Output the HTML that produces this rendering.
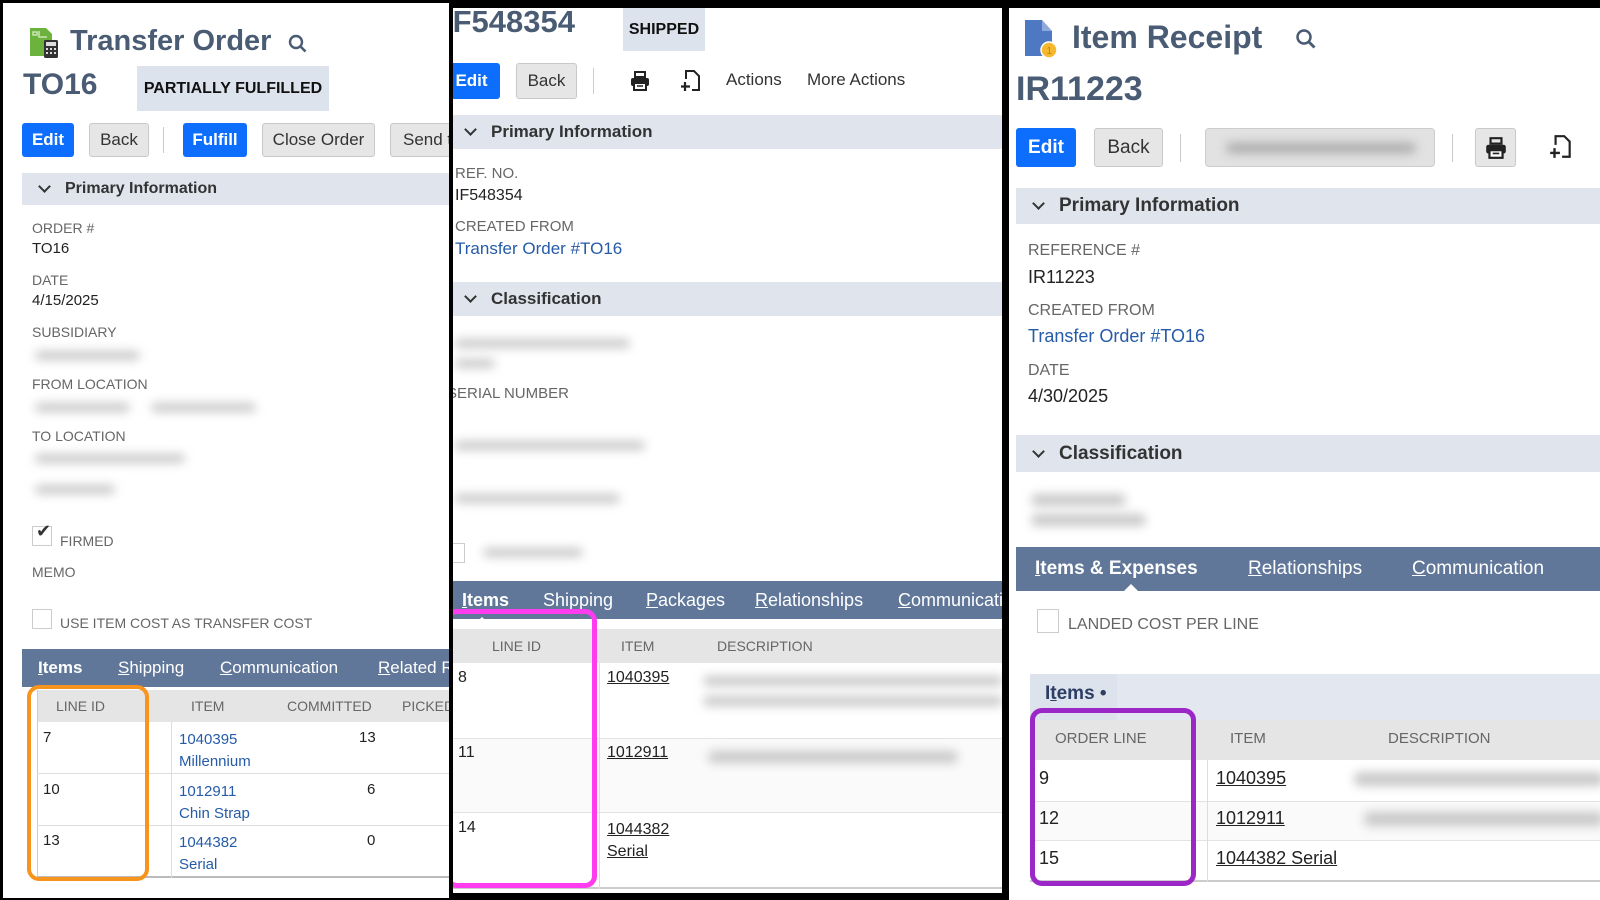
<!DOCTYPE html>
<html><head><meta charset="utf-8"><style>
*{margin:0;padding:0;box-sizing:border-box}
body{width:1600px;height:900px;background:#000;position:relative;overflow:hidden;font-family:"Liberation Sans",Arial,sans-serif;color:#222}
.p{position:absolute;background:#fff;overflow:hidden}
.a{position:absolute;white-space:nowrap}
.t{font-weight:bold;color:#4a5b74}
.btn{position:absolute;border-radius:3px;font-size:17px;display:flex;align-items:center;justify-content:center}
.bl{background:#0d6efd;color:#fff;font-weight:bold}
.gr{background:#e6e6e6;border:1px solid #c9c9c9;color:#333}
.div{position:absolute;width:1px;background:#ccc}
.hd{position:absolute;background:#e0e5ed;font-weight:bold;color:#333;display:flex;align-items:center}
.hd i{display:inline-block;width:9px;height:9px;border-right:2.5px solid #333;border-bottom:2.5px solid #333;transform:rotate(45deg);margin:-5px 16px 0 4px;font-style:normal}
.lb{position:absolute;color:#666;font-size:14px;white-space:nowrap}
.v{position:absolute;color:#222;font-size:15px;white-space:nowrap}
.lk{color:#255ba8}
.bz{position:absolute;background:#c8c8c8;filter:blur(5px);border-radius:6px;height:9px}
.tab{position:absolute;background:#607799;color:#fff}
.tab span{position:absolute;white-space:nowrap}
.tab u{text-decoration:underline}
.th{position:absolute;background:#e5e5e5;color:#666;font-size:14px}
.cb{position:absolute;width:20px;height:20px;border:1px solid #ccc;background:#fff}
.u{text-decoration:underline;color:#222}
</style></head><body>

<!-- LEFT PANEL -->
<div class="p" style="left:3px;top:3px;width:446px;height:895px">
 <svg class="a" style="left:25px;top:23px" width="32" height="34" viewBox="0 0 32 34"><path d="M2 2h16l6 6v22H2z" fill="#6cb33e"/><path d="M5 6h4v3H5zM11 5v6h8" stroke="#c9e6b0" stroke-width="1.5" fill="none"/><rect x="16" y="14" width="14" height="18" rx="1.5" fill="#333"/><rect x="18" y="16" width="10" height="4" fill="#ddd"/><g fill="#ddd"><rect x="18" y="22" width="2" height="2"/><rect x="22" y="22" width="2" height="2"/><rect x="26" y="22" width="2" height="2"/><rect x="18" y="26" width="2" height="2"/><rect x="22" y="26" width="2" height="2"/><rect x="26" y="26" width="2" height="2"/></g></svg>
 <div class="a t" style="left:67px;top:22px;font-size:29px">Transfer Order</div>
 <svg class="a" style="left:285px;top:31px" width="20" height="20" viewBox="0 0 20 20"><circle cx="8" cy="8" r="6" stroke="#4a5b74" stroke-width="2.4" fill="none"/><path d="M12.5 12.5l5 5" stroke="#4a5b74" stroke-width="2.6"/></svg>
 <div class="a t" style="left:20px;top:65px;font-size:30px">TO16</div>
 <div class="a" style="left:134px;top:63px;width:192px;height:45px;background:#dde3ed;font-weight:bold;font-size:16px;color:#111;display:flex;align-items:center;justify-content:center">PARTIALLY FULFILLED</div>
 <div class="btn bl" style="left:19px;top:120px;width:52px;height:34px">Edit</div>
 <div class="btn gr" style="left:86px;top:120px;width:60px;height:34px">Back</div>
 <div class="div" style="left:160px;top:124px;height:26px"></div>
 <div class="btn bl" style="left:180px;top:120px;width:64px;height:34px">Fulfill</div>
 <div class="btn gr" style="left:259px;top:120px;width:113px;height:34px">Close Order</div>
 <div class="btn gr" style="left:387px;top:120px;width:80px;height:34px;justify-content:flex-start;padding-left:12px">Send to</div>
 <div class="hd" style="left:19px;top:170px;width:430px;height:32px;font-size:16px;padding-left:14px"><i></i>Primary Information</div>
 <div class="lb" style="left:29px;top:217px">ORDER #</div><div class="v" style="left:29px;top:237px">TO16</div>
 <div class="lb" style="left:29px;top:269px">DATE</div><div class="v" style="left:29px;top:289px">4/15/2025</div>
 <div class="lb" style="left:29px;top:321px">SUBSIDIARY</div><div class="bz" style="left:32px;top:348px;width:105px"></div>
 <div class="lb" style="left:29px;top:373px">FROM LOCATION</div><div class="bz" style="left:32px;top:400px;width:95px"></div><div class="bz" style="left:148px;top:400px;width:105px"></div>
 <div class="lb" style="left:29px;top:425px">TO LOCATION</div><div class="bz" style="left:32px;top:451px;width:150px"></div><div class="bz" style="left:32px;top:482px;width:80px"></div>
 <div class="cb" style="left:29px;top:523px"></div><div class="a" style="left:33px;top:518px;font-size:18px;color:#333">✔</div>
 <div class="lb" style="left:57px;top:530px">FIRMED</div>
 <div class="lb" style="left:29px;top:561px">MEMO</div>
 <div class="cb" style="left:29px;top:606px"></div><div class="lb" style="left:57px;top:612px">USE ITEM COST AS TRANSFER COST</div>
 <div class="tab" style="left:19px;top:646px;width:430px;height:38px;font-size:17px">
  <span style="left:16px;top:9px;font-weight:bold"><u>I</u>tems</span><span style="left:96px;top:9px"><u>S</u>hipping</span><span style="left:198px;top:9px"><u>C</u>ommunication</span><span style="left:356px;top:9px"><u>R</u>elated Records</span></div>
 <div class="th" style="left:34px;top:687px;width:415px;height:32px;border-left:1px solid #ccc"></div>
 <div class="lb" style="left:53px;top:695px;color:#666">LINE ID</div><div class="lb" style="left:188px;top:695px">ITEM</div><div class="lb" style="left:284px;top:695px">COMMITTED</div><div class="lb" style="left:399px;top:695px">PICKED</div>
 <div class="a" style="left:34px;top:719px;width:415px;height:156px;border-left:1px solid #ccc;border-bottom:2px solid #bbb"></div>
 <div class="a" style="left:34px;top:770px;width:415px;height:1px;background:#ddd"></div>
 <div class="a" style="left:34px;top:822px;width:415px;height:1px;background:#ddd"></div>
 <div class="a" style="left:168px;top:719px;width:1px;height:156px;background:#ddd"></div>
 <div class="v" style="left:40px;top:726px">7</div><div class="v" style="left:40px;top:778px">10</div><div class="v" style="left:40px;top:829px">13</div>
 <div class="v lk" style="left:176px;top:726px;line-height:22px">1040395<br>Millennium</div>
 <div class="v lk" style="left:176px;top:778px;line-height:22px">1012911<br>Chin Strap</div>
 <div class="v lk" style="left:176px;top:829px;line-height:22px">1044382<br>Serial</div>
 <div class="v" style="left:356px;top:726px">13</div><div class="v" style="left:364px;top:778px">6</div><div class="v" style="left:364px;top:829px">0</div>
 <div class="a" style="left:24px;top:682px;width:122px;height:196px;border:4px solid #f7941d;border-radius:12px"></div>
</div>

<!-- MIDDLE PANEL -->
<div class="p" style="left:453px;top:8px;width:549px;height:885px">
 <div class="a t" style="left:-9px;top:-4px;font-size:31px">IF548354</div>
 <div class="a" style="left:170px;top:0;width:82px;height:43px;background:#dde3ed;font-weight:bold;font-size:16px;color:#111;display:flex;align-items:center;justify-content:center">SHIPPED</div>
 <div class="btn bl" style="left:-10px;top:55px;width:57px;height:36px">Edit</div>
 <div class="btn gr" style="left:63px;top:55px;width:61px;height:36px">Back</div>
 <div class="div" style="left:140px;top:60px;height:26px"></div>
 <svg class="a" style="left:176px;top:62px" width="22" height="22" viewBox="0 0 22 22"><path d="M6 2h10v5H6z" fill="none" stroke="#222" stroke-width="2"/><rect x="2" y="8" width="18" height="8" rx="2" fill="#222"/><rect x="5" y="13" width="12" height="7" fill="#fff" stroke="#222" stroke-width="2"/><path d="M8 16h6" stroke="#222" stroke-width="1.5"/></svg>
 <svg class="a" style="left:227px;top:61px" width="22" height="24" viewBox="0 0 22 24"><path d="M6 10V2h8l5 5v14h-7" fill="none" stroke="#222" stroke-width="2"/><path d="M5 13v9M1 17.5h9" stroke="#222" stroke-width="2.2"/></svg>
 <div class="a" style="left:273px;top:62px;font-size:17px;color:#333">Actions</div>
 <div class="a" style="left:354px;top:62px;font-size:17px;color:#333">More Actions</div>
 <div class="hd" style="left:-5px;top:107px;width:560px;height:34px;font-size:17px;padding-left:14px"><i></i>Primary Information</div>
 <div class="lb" style="left:2px;top:157px;font-size:15px">REF. NO.</div><div class="v" style="left:2px;top:179px;font-size:16px">IF548354</div>
 <div class="lb" style="left:2px;top:210px;font-size:15px">CREATED FROM</div><div class="v lk" style="left:2px;top:231px;font-size:17px">Transfer Order #TO16</div>
 <div class="hd" style="left:-5px;top:274px;width:560px;height:34px;font-size:17px;padding-left:14px"><i></i>Classification</div>
 <div class="bz" style="left:2px;top:331px;width:175px"></div><div class="bz" style="left:2px;top:351px;width:40px"></div>
 <div class="lb" style="left:-6px;top:377px;font-size:15px">SERIAL NUMBER</div>
 <div class="bz" style="left:2px;top:433px;width:190px"></div>
 <div class="bz" style="left:2px;top:486px;width:165px"></div>
 <div class="cb" style="left:-8px;top:535px"></div><div class="bz" style="left:30px;top:540px;width:100px"></div>
 <div class="tab" style="left:-5px;top:573px;width:560px;height:38px;font-size:18px">
  <span style="left:14px;top:9px;font-weight:bold"><u>I</u>tems</span><span style="left:95px;top:9px">Shipping</span><span style="left:198px;top:9px"><u>P</u>ackages</span><span style="left:307px;top:9px"><u>R</u>elationships</span><span style="left:450px;top:9px"><u>C</u>ommunication</span></div>
 <div class="a" style="left:22px;top:609px;width:0;height:0;border-left:7px solid transparent;border-right:7px solid transparent;border-bottom:7px solid #fff"></div>
 <div class="th" style="left:-2px;top:621px;width:551px;height:34px"></div>
 <div class="lb" style="left:39px;top:630px">LINE ID</div><div class="lb" style="left:168px;top:630px">ITEM</div><div class="lb" style="left:264px;top:630px">DESCRIPTION</div>
 <div class="a" style="left:-2px;top:655px;width:551px;height:226px;border-bottom:2px solid #ccc"></div>
 <div class="a" style="left:0;top:730px;width:549px;height:75px;background:#fafafa;border-top:1px solid #e3e3e3;border-bottom:1px solid #e3e3e3"></div>
 <div class="a" style="left:146px;top:655px;width:1px;height:226px;background:#ddd"></div>
 <div class="v" style="left:5px;top:661px;font-size:16px">8</div><div class="v" style="left:5px;top:736px;font-size:16px">11</div><div class="v" style="left:5px;top:811px;font-size:16px">14</div>
 <div class="v u" style="left:154px;top:661px;font-size:16px">1040395</div>
 <div class="v u" style="left:154px;top:736px;font-size:16px">1012911</div>
 <div class="v u" style="left:154px;top:811px;font-size:16px;line-height:22px">1044382<br>Serial</div>
 <div class="bz" style="left:250px;top:668px;width:300px;height:10px"></div><div class="bz" style="left:250px;top:688px;width:300px;height:10px"></div>
 <div class="bz" style="left:255px;top:743px;width:250px;height:12px"></div>
 <div class="a" style="left:-8px;top:601px;width:152px;height:279px;border:5px solid #ff3cf0;border-radius:12px"></div>
</div>

<!-- RIGHT PANEL -->
<div class="p" style="left:1009px;top:8px;width:591px;height:892px">
 <svg class="a" style="left:14px;top:10px" width="40" height="42" viewBox="0 0 40 42"><path d="M2 2h17l10 11v25H2z" fill="#4f78c2"/><path d="M19 2v11h10z" fill="#8fa9dc"/><circle cx="26" cy="32" r="8" fill="#f5b82e" stroke="#fff" stroke-width="1.5"/><text x="23.5" y="36" font-size="10" fill="#b8860b" font-family="Liberation Sans">1</text></svg>
 <div class="a t" style="left:63px;top:11px;font-size:32px">Item Receipt</div>
 <svg class="a" style="left:286px;top:20px" width="22" height="22" viewBox="0 0 22 22"><circle cx="9" cy="9" r="6.5" stroke="#4a5b74" stroke-width="2.5" fill="none"/><path d="M14 14l5.5 5.5" stroke="#4a5b74" stroke-width="2.8"/></svg>
 <div class="a t" style="left:7px;top:62px;font-size:34px">IR11223</div>
 <div class="btn bl" style="left:7px;top:120px;width:60px;height:39px;font-size:19px">Edit</div>
 <div class="btn gr" style="left:85px;top:120px;width:69px;height:39px;font-size:19px">Back</div>
 <div class="div" style="left:171px;top:126px;height:28px"></div>
 <div class="a" style="left:196px;top:120px;width:230px;height:39px;background:#e2e2e2;border:1px solid #ccc;border-radius:4px"><div class="bz" style="left:20px;top:14px;width:190px;height:10px;background:#aaa"></div></div>
 <div class="div" style="left:443px;top:126px;height:28px"></div>
 <div class="btn gr" style="left:466px;top:120px;width:41px;height:39px"><svg width="24" height="24" viewBox="0 0 22 22"><path d="M6 2h10v5H6z" fill="none" stroke="#222" stroke-width="2"/><rect x="2" y="8" width="18" height="8" rx="2" fill="#222"/><rect x="5" y="13" width="12" height="7" fill="#fff" stroke="#222" stroke-width="2"/><path d="M8 16h6" stroke="#222" stroke-width="1.5"/></svg></div>
 <svg class="a" style="left:540px;top:126px" width="24" height="26" viewBox="0 0 22 24"><path d="M6 10V2h8l5 5v14h-7" fill="none" stroke="#222" stroke-width="2"/><path d="M5 13v9M1 17.5h9" stroke="#222" stroke-width="2.2"/></svg>
 <div class="hd" style="left:7px;top:180px;width:584px;height:36px;font-size:19px;padding-left:14px"><i></i>Primary Information</div>
 <div class="lb" style="left:19px;top:234px;font-size:16px">REFERENCE #</div><div class="v" style="left:19px;top:259px;font-size:18px">IR11223</div>
 <div class="lb" style="left:19px;top:294px;font-size:16px">CREATED FROM</div><div class="v lk" style="left:19px;top:318px;font-size:18px">Transfer Order #TO16</div>
 <div class="lb" style="left:19px;top:354px;font-size:16px">DATE</div><div class="v" style="left:19px;top:378px;font-size:18px">4/30/2025</div>
 <div class="hd" style="left:7px;top:427px;width:584px;height:37px;font-size:19px;padding-left:14px"><i></i>Classification</div>
 <div class="bz" style="left:22px;top:486px;width:95px;height:12px"></div><div class="bz" style="left:22px;top:506px;width:115px;height:12px"></div>
 <div class="tab" style="left:7px;top:539px;width:584px;height:44px;font-size:19px">
  <span style="left:19px;top:11px;font-weight:bold"><u>I</u>tems &amp; Expenses</span><span style="left:232px;top:11px"><u>R</u>elationships</span><span style="left:396px;top:11px"><u>C</u>ommunication</span></div>
 <div class="a" style="left:114px;top:576px;width:0;height:0;border-left:8px solid transparent;border-right:8px solid transparent;border-bottom:8px solid #fff"></div>
 <div class="cb" style="left:28px;top:601px;width:22px;height:24px"></div>
 <div class="lb" style="left:59px;top:608px;font-size:16px">LANDED COST PER LINE</div>
 <div class="a" style="left:21px;top:666px;width:570px;height:46px;background:#e3e8f0"></div>
 <div class="a" style="left:21px;top:666px;width:87px;height:46px;background:#dde3ec"></div>
 <div class="a" style="left:36px;top:675px;font-size:19px;font-weight:bold;color:#2c3e63">I<span style="text-decoration:underline">t</span>ems •</div>
 <div class="th" style="left:21px;top:712px;width:570px;height:40px"></div>
 <div class="lb" style="left:46px;top:722px;font-size:15px">ORDER LINE</div><div class="lb" style="left:221px;top:722px;font-size:15px">ITEM</div><div class="lb" style="left:379px;top:722px;font-size:15px">DESCRIPTION</div>
 <div class="a" style="left:21px;top:752px;width:570px;height:122px;border-bottom:2px solid #ccc"></div>
 <div class="a" style="left:21px;top:793px;width:570px;height:40px;background:#fafafa;border-top:1px solid #e3e3e3;border-bottom:1px solid #e3e3e3"></div>
 <div class="a" style="left:198px;top:752px;width:1px;height:122px;background:#ddd"></div>
 <div class="v" style="left:30px;top:760px;font-size:18px">9</div><div class="v" style="left:30px;top:800px;font-size:18px">12</div><div class="v" style="left:30px;top:840px;font-size:18px">15</div>
 <div class="v u" style="left:207px;top:760px;font-size:18px">1040395</div>
 <div class="v u" style="left:207px;top:800px;font-size:18px">1012911</div>
 <div class="v u" style="left:207px;top:840px;font-size:18px">1044382 Serial</div>
 <div class="bz" style="left:345px;top:764px;width:250px;height:14px"></div>
 <div class="bz" style="left:355px;top:804px;width:240px;height:14px"></div>
 <div class="a" style="left:21px;top:700px;width:166px;height:178px;border:5px solid #9b27c6;border-radius:12px"></div>
</div>
</body></html>
